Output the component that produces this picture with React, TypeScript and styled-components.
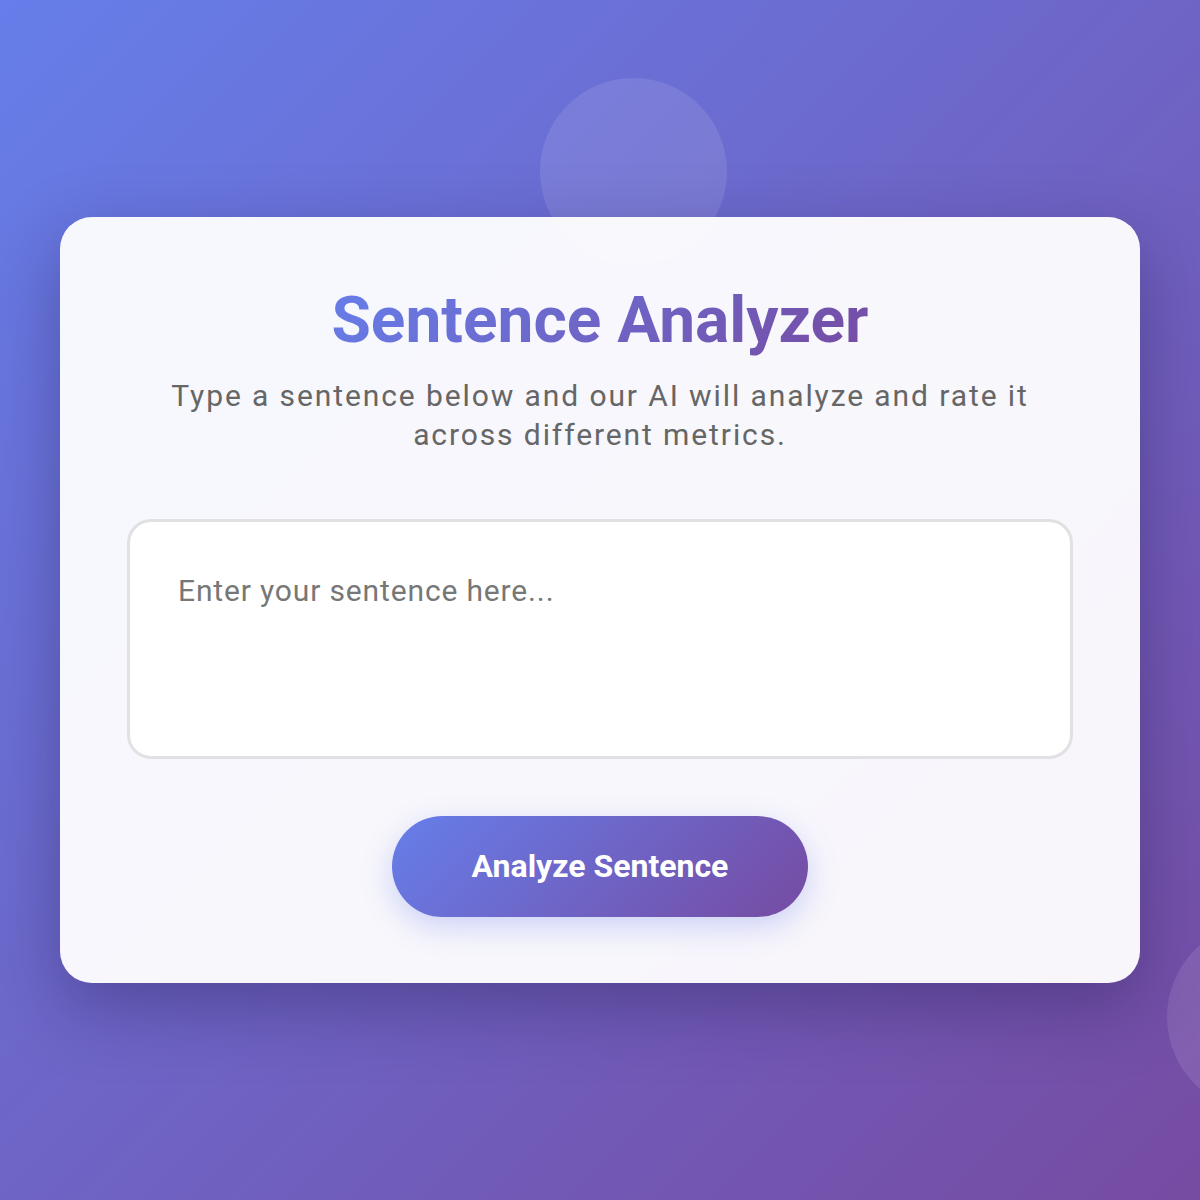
import styled, { createGlobalStyle } from "styled-components";

const GlobalStyle = createGlobalStyle`
	* {
		box-sizing: border-box;
	}
	html,
	body {
		margin: 0;
		padding: 0;
	}
	body {
		font-family: Roboto, "Noto Sans", "Liberation Sans", sans-serif;
		background: linear-gradient(135deg, #667eea 0%, #764ba2 100%);
		min-height: 100vh;
		overflow: hidden;
	}
`;

const Page = styled.main`
	position: relative;
	min-height: 100vh;
	display: flex;
	align-items: center;
	justify-content: center;
	padding: 0 60px;
	overflow: hidden;
`;

// floating decorative bubbles behind the card
const Bubble = styled.div<{ $top: number; $left: number; $size: number }>`
	position: absolute;
	top: ${(p) => p.$top}px;
	left: ${(p) => p.$left}px;
	width: ${(p) => p.$size}px;
	height: ${(p) => p.$size}px;
	border-radius: 50%;
	background: rgba(255, 255, 255, 0.1);
	z-index: 0;
`;

const Card = styled.section`
	position: relative;
	z-index: 1;
	width: 100%;
	max-width: 1080px;
	background: rgba(255, 255, 255, 0.95);
	border-radius: 32px;
	box-shadow: 0 24px 70px rgba(30, 20, 70, 0.35);
	padding: 66px 67px 66px;
	display: flex;
	flex-direction: column;
	align-items: center;
	text-align: center;
`;

const Title = styled.h1`
	margin: 0;
	font-size: 64px;
	line-height: 1.2;
	font-weight: 700;
	background: linear-gradient(135deg, #667eea 0%, #764ba2 100%);
	-webkit-background-clip: text;
	background-clip: text;
	color: transparent;
`;

const Subtitle = styled.p`
	margin: 16px 0 65px;
	font-size: 30px;
	line-height: 39px;
	letter-spacing: 1.9px;
	color: #666;
`;

const Input = styled.textarea`
	display: block;
	width: 100%;
	height: 240px;
	resize: none;
	border: 3px solid #e1e1e4;
	border-radius: 24px;
	background: #fff;
	padding: 46px 48px;
	font-family: inherit;
	font-size: 30px;
	line-height: 1.5;
	letter-spacing: 0.85px;
	color: #333;
	outline: none;

	&::placeholder {
		color: #777;
	}
`;

const AnalyzeButton = styled.button`
	margin-top: 57px;
	padding: 32px 80px;
	border: none;
	border-radius: 60px;
	background: linear-gradient(135deg, #667eea 0%, #764ba2 100%);
	color: #fff;
	font-family: inherit;
	font-size: 32px;
	font-weight: 700;
	line-height: 37px;
	cursor: pointer;
	box-shadow: 0 10px 30px rgba(102, 126, 234, 0.3);
`;

const App = () => {
	return (
		<>
			<GlobalStyle />
			<Page>
				<Bubble $top={78} $left={540} $size={187} />
				<Bubble $top={922} $left={1167} $size={190} />
				<Card>
					<Title>Sentence Analyzer</Title>
					<Subtitle>
						Type a sentence below and our AI will analyze and rate it across
						different metrics.
					</Subtitle>
					<Input placeholder="Enter your sentence here..." />
					<AnalyzeButton>Analyze Sentence</AnalyzeButton>
				</Card>
			</Page>
		</>
	);
};

export default App;
